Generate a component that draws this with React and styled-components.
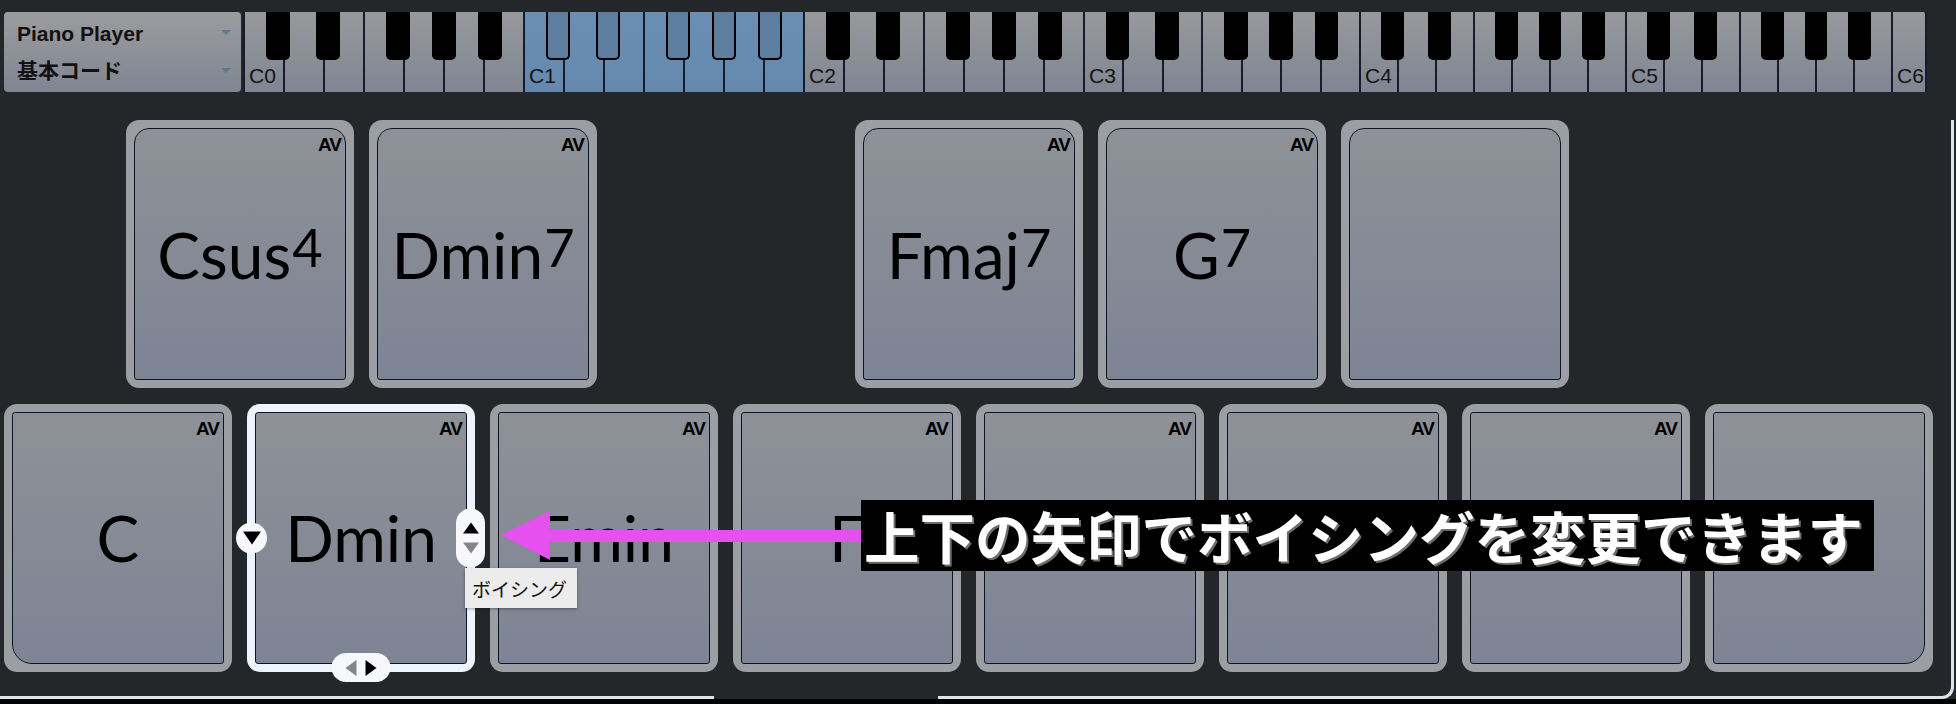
import React from 'react';
import styled, { createGlobalStyle } from 'styled-components';

const GlobalStyle = createGlobalStyle`
  html, body {
    margin: 0;
    padding: 0;
    background: #23272a;
  }
  body {
    font-family: "Liberation Sans", Arial, sans-serif;
  }
`;

const Screen = styled.div`
  position: relative;
  width: 1956px;
  height: 704px;
  overflow: hidden;
  box-sizing: border-box;
  padding-top: 12px;
  background: #23272a;
`;

const TopBar = styled.div`
  display: flex;
  gap: 2px;
  height: 80px;
  padding-left: 4px;
`;

const PresetPanel = styled.div`
  width: 237px;
  box-sizing: border-box;
  padding: 4px 10px 0 13px;
  border-radius: 4px;
  background: linear-gradient(#9b9c9e, #7f8592);
  display: flex;
  flex-direction: column;
`;

const PresetRow = styled.div`
  height: 35px;
  display: flex;
  align-items: center;
  justify-content: space-between;
  font-family: "Liberation Sans", "Noto Sans CJK JP", sans-serif;
  font-weight: 700;
  font-size: 21px;
  color: #111;
`;

const Caret = styled.span`
  width: 0;
  height: 0;
  margin-top: ${(p) => p.$drop || 0}px;
  border-left: 5px solid transparent;
  border-right: 5px solid transparent;
  border-top: 5px solid #5c7890;
`;

const Keyboard = styled.div`
  display: flex;
  height: 80px;
`;

const Octave = styled.div`
  position: relative;
  display: flex;
  flex: 0 0 ${(p) => p.$width}px;
`;

const WhiteKey = styled.div`
  flex: 1;
  box-sizing: border-box;
  border-left: 2px solid #141c2e;
  ${(p) => (p.$end ? 'border-right: 2px solid #141c2e; border-top-right-radius: 3px;' : '')}
  background: ${(p) =>
    p.$active
      ? 'linear-gradient(#6b8eb4, #6588ae)'
      : 'linear-gradient(#98999b, #7f8592)'};
  display: flex;
  align-items: flex-end;
  padding: 0 0 6px 4px;
  font-size: 21px;
  line-height: 1;
  color: #141414;
`;

const BlackKey = styled.div`
  position: absolute;
  top: 0;
  left: ${(p) => p.$left}%;
  width: 8.6%;
  height: 48px;
  box-sizing: border-box;
  border-radius: 0 0 5px 5px;
  background: ${(p) => (p.$active ? '#5e7e9f' : '#000')};
  border: ${(p) => (p.$active ? '2px solid #000' : 'none')};
  border-top: none;
`;

const Stage = styled.div`
  margin-top: 28px;
  width: 1954px;
  box-sizing: border-box;
  padding-left: 4px;
  border-right: 3px solid #dfe4eb;
  border-bottom: 3px solid #dfe4eb;
  border-bottom-right-radius: 12px;
  display: flex;
  flex-direction: column;
  gap: 16px;
`;

const FrameGap = styled.div`
  width: 224px;
  height: 3px;
  margin: 8px 0 -3px 710px;
  background: #23272a;
`;

const PadRow = styled.div`
  display: flex;
  gap: 15px;
  height: 268px;
  padding-left: ${(p) => p.$indent || 0}px;
`;

const Slot = styled.div`
  flex: 0 0 228px;
`;

const PadFrame = styled.div`
  position: relative;
  flex: 0 0 228px;
  box-sizing: border-box;
  padding: 8px;
  border-radius: 13px;
  background: ${(p) => (p.$selected ? '#eef4fc' : '#9b9ea2')};
  display: flex;
`;

const faceRadius = {
  top: '15px 15px 3px 3px',
  first: '3px 3px 3px 20px',
  last: '3px 3px 20px 3px',
  mid: '3px',
};

const PadFace = styled.div`
  position: relative;
  flex: 1;
  border: 1.5px solid #0c1527;
  border-radius: ${(p) => faceRadius[p.$shape]};
  background: linear-gradient(#8e9197, #7d8494);
  display: flex;
  align-items: center;
  justify-content: center;
`;

const AvBadge = styled.span`
  position: absolute;
  top: 6px;
  right: 4px;
  font-family: "Liberation Sans", Arial, sans-serif;
  font-weight: 700;
  font-size: 19px;
  letter-spacing: -1px;
  line-height: 1;
  color: #000;
`;

const ChordName = styled.span`
  font-family: Lato, "Noto Sans", sans-serif;
  font-weight: 400;
  font-size: 64px;
  line-height: 1;
  color: #000;
  white-space: nowrap;
`;

const Sup = styled.span`
  font-size: 0.82em;
  vertical-align: 12px;
  margin-left: 1px;
`;

const CircleHandle = styled.div`
  position: absolute;
  left: -11px;
  top: 50%;
  transform: translateY(-50%);
  width: 31px;
  height: 31px;
  border-radius: 50%;
  background: #f6f8fb;
  display: flex;
  align-items: center;
  justify-content: center;
  z-index: 2;
`;

const VoicingPill = styled.div`
  position: absolute;
  right: -10px;
  top: 50%;
  transform: translateY(-50%);
  width: 29px;
  height: 59px;
  border-radius: 15px;
  background: #f6f8fb;
  display: flex;
  flex-direction: column;
  align-items: center;
  justify-content: center;
  gap: 9px;
  z-index: 2;
`;

const InversionPill = styled.div`
  position: absolute;
  bottom: -10px;
  left: 50%;
  transform: translateX(-50%);
  width: 59px;
  height: 29px;
  border-radius: 15px;
  background: #f6f8fb;
  display: flex;
  align-items: center;
  justify-content: center;
  gap: 9px;
  z-index: 2;
`;

const Tri = styled.span`
  width: 0;
  height: 0;
  ${(p) => {
    const c = p.$dim ? '#858585' : '#000';
    const s = p.$size || 8;
    const h = Math.round(s * 1.4);
    if (p.$dir === 'up') return `border-left: ${s}px solid transparent; border-right: ${s}px solid transparent; border-bottom: ${h}px solid ${c};`;
    if (p.$dir === 'down') return `border-left: ${s}px solid transparent; border-right: ${s}px solid transparent; border-top: ${h}px solid ${c};`;
    if (p.$dir === 'left') return `border-top: ${s}px solid transparent; border-bottom: ${s}px solid transparent; border-right: ${h}px solid ${c};`;
    return `border-top: ${s}px solid transparent; border-bottom: ${s}px solid transparent; border-left: ${h}px solid ${c};`;
  }}
`;

const Tooltip = styled.div`
  position: absolute;
  left: 218px;
  top: 164px;
  height: 40px;
  padding: 0 10px 0 7px;
  background: #ececec;
  box-shadow: 0 1px 3px rgba(0, 0, 0, 0.35);
  display: flex;
  align-items: center;
  font-family: "Noto Sans CJK JP", sans-serif;
  font-size: 19px;
  color: #111;
  white-space: nowrap;
  z-index: 3;
`;

const Foot = styled.div`
  height: 5px;
  background: #000;
`;

const Pointer = styled.svg`
  position: absolute;
  left: 498px;
  top: 508px;
  z-index: 5;
`;

const Caption = styled.div`
  position: absolute;
  left: 861px;
  top: 500px;
  width: 1013px;
  height: 71px;
  box-sizing: border-box;
  padding-left: 3px;
  background: #000;
  color: #fff;
  font-family: "Noto Sans CJK JP", sans-serif;
  font-weight: 700;
  font-size: 55.5px;
  line-height: 71px;
  white-space: nowrap;
  text-shadow: 2px 2px 0 #6d6d6d;
  z-index: 5;
`;

const octaves = [
  { label: 'C0', width: 280 },
  { label: 'C1', width: 280, active: true },
  { label: 'C2', width: 280 },
  { label: 'C3', width: 276 },
  { label: 'C4', width: 266 },
  { label: 'C5', width: 266 },
];

const blackOffsets = [8.2, 26.1, 51.1, 67.5, 83.9];

const upperPads = [
  { name: 'Csus', sup: '4' },
  { name: 'Dmin', sup: '7' },
  null,
  { name: 'Fmaj', sup: '7' },
  { name: 'G', sup: '7' },
  { empty: true },
];

// pads 5-7 sit under the caption; only their AV tag shows
const lowerPads = [
  { name: 'C' },
  { name: 'Dmin', selected: true },
  { name: 'Emin' },
  { name: 'F' },
  { name: '' },
  { name: '' },
  { name: '' },
  { empty: true },
];

function Pad({ pad, shape }) {
  return (
    <PadFrame $selected={pad.selected}>
      <PadFace $shape={shape}>
        {!pad.empty && <AvBadge>AV</AvBadge>}
        {pad.name && (
          <ChordName>
            {pad.name}
            {pad.sup && <Sup>{pad.sup}</Sup>}
          </ChordName>
        )}
      </PadFace>
      {pad.selected && (
        <>
          <CircleHandle>
            <Tri $dir="down" $size={9} />
          </CircleHandle>
          <VoicingPill>
            <Tri $dir="up" $size={8} />
            <Tri $dir="down" $size={8} $dim />
          </VoicingPill>
          <InversionPill>
            <Tri $dir="left" $size={8} $dim />
            <Tri $dir="right" $size={8} />
          </InversionPill>
          <Tooltip>ボイシング</Tooltip>
        </>
      )}
    </PadFrame>
  );
}

export default function App() {
  return (
    <>
      <GlobalStyle />
      <Screen>
        <TopBar>
          <PresetPanel>
            <PresetRow>
              Piano Player
              <Caret $drop={-2} />
            </PresetRow>
            <PresetRow>
              基本コード
              <Caret $drop={4} />
            </PresetRow>
          </PresetPanel>
          <Keyboard>
            {octaves.map((o) => (
              <Octave key={o.label} $width={o.width}>
                {Array.from({ length: 7 }).map((_, i) => (
                  <WhiteKey key={i} $active={o.active}>
                    {i === 0 ? o.label : ''}
                  </WhiteKey>
                ))}
                {blackOffsets.map((left) => (
                  <BlackKey key={left} $left={left} $active={o.active} />
                ))}
              </Octave>
            ))}
            <Octave $width={36}>
              <WhiteKey $end>C6</WhiteKey>
            </Octave>
          </Keyboard>
        </TopBar>

        <Stage>
          <PadRow $indent={122}>
            {upperPads.map((pad, i) =>
              pad ? <Pad key={i} pad={pad} shape="top" /> : <Slot key={i} />
            )}
          </PadRow>
          <PadRow>
            {lowerPads.map((pad, i) => (
              <Pad
                key={i}
                pad={pad}
                shape={i === 0 ? 'first' : i === lowerPads.length - 1 ? 'last' : 'mid'}
              />
            ))}
          </PadRow>
          <FrameGap />
        </Stage>
        <Foot />

        <Pointer width="366" height="56" viewBox="0 0 366 56">
          <rect x="50" y="22" width="316" height="12" fill="#e650ef" />
          <polygon points="3,27 52,3 52,52" fill="#e650ef" />
        </Pointer>
        <Caption>上下の矢印でボイシングを変更できます</Caption>
      </Screen>
    </>
  );
}
